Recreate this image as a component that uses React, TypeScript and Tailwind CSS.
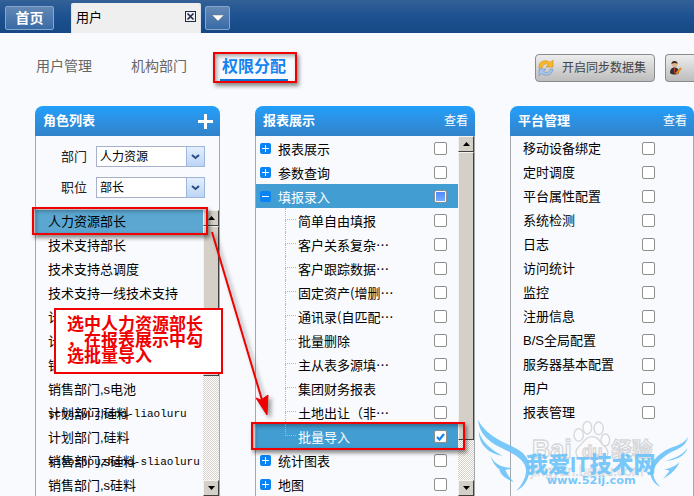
import clsx from "clsx";

const roles = [
    { name: "人力资源部长", active: true },
    { name: "技术支持部长" },
    { name: "技术支持总调度" },
    { name: "技术支持一线技术支持" },
    { name: "计划部长" },
    { name: "计划专员" },
    { name: "销售部长" },
    { name: "销售部门,s电池" },
    { name: "计划部门,硅料", account: "schaiwuzhang-liaoluru" },
    { name: "计划部门,硅料" },
    { name: "销售部门,s硅料", account: "xiaoshouzhang-sliaoluru" },
    { name: "销售部门,s硅料" },
];

const reports = [
    { name: "报表展示" },
    { name: "参数查询" },
    {
        name: "填报录入",
        children: [
            "简单自由填报",
            "客户关系复杂…",
            "客户跟踪数据…",
            "固定资产(增删…",
            "通讯录(自匹配…",
            "批量删除",
            "主从表多源填…",
            "集团财务报表",
            "土地出让（非…",
            "批量导入",
        ],
    },
    { name: "统计图表" },
    { name: "地图" },
];

const platform = [
    "移动设备绑定",
    "定时调度",
    "平台属性配置",
    "系统检测",
    "日志",
    "访问统计",
    "监控",
    "注册信息",
    "B/S全局配置",
    "服务器基本配置",
    "用户",
    "报表管理",
];

function Checkbox({ label, checked, mixed }: { label: string; checked?: boolean; mixed?: boolean }) {
    return (
        <span className="grid shrink-0">
            <input
                type="checkbox"
                aria-label={label}
                aria-checked={mixed ? "mixed" : undefined}
                defaultChecked={checked}
                className={clsx(
                    "peer col-start-1 row-start-1 w-[13px] h-[13px] appearance-none rounded-xs border border-[#8e8e8e]",
                    mixed ? "bg-linear-to-b from-[#4d86f7] to-[#79b0ff] shadow-[inset_0_0_0_1px_#fff]" : "bg-white"
                )}
            />
            <svg
                viewBox="0 0 13 13"
                className="col-start-1 row-start-1 w-[13px] h-[13px] hidden peer-checked:block pointer-events-none"
            >
                <path d="M3 7l2.5 2.5L10 4" fill="none" stroke="#1583ef" strokeWidth="2.2" />
            </svg>
        </span>
    );
}

function Redbox({ className }: { className: string }) {
    return (
        <span
            className={clsx(
                "absolute z-10 border-2 border-[#f00000] pointer-events-none shadow-[2px_3px_4px_rgba(0,0,0,0.45),inset_2px_2px_4px_rgba(0,0,0,0.35)]",
                className
            )}
        />
    );
}

function Toggle({ open, label }: { open?: boolean; label: string }) {
    return (
        <button aria-label={label} className="w-[11px] h-[11px] shrink-0 rounded-xs bg-[#0a84f5]">
            <svg viewBox="0 0 11 11" className="w-[11px] h-[11px]">
                <path d={open ? "M2 5.5h7" : "M2 5.5h7M5.5 2v7"} stroke="#fff" strokeWidth="1" />
            </svg>
        </button>
    );
}

// classic grey scrollbar: up button, thumb, dithered track, down button
function Scrollbar({ thumb }: { thumb: string }) {
    const raised = "bg-[#d4d0c8] border border-t-[#f4f2ee] border-l-[#f4f2ee] border-r-[#404040] border-b-[#404040]";
    return (
        <div className="w-4 shrink-0 h-full flex flex-col bg-[repeating-conic-gradient(#d4d0c8_0_25%,#fff_0_50%)] bg-[length:2px_2px]">
            <button aria-label="向上滚动" className={clsx("h-4 shrink-0 flex items-center justify-center", raised)}>
                <svg viewBox="0 0 7 4" className="w-[7px] h-1">
                    <path d="M0 4h7L3.5 0z" />
                </svg>
            </button>
            <div className={clsx(raised, thumb)} />
            <button aria-label="向下滚动" className={clsx("h-4 shrink-0 mt-auto flex items-center justify-center", raised)}>
                <svg viewBox="0 0 7 4" className="w-[7px] h-1">
                    <path d="M0 0h7L3.5 4z" />
                </svg>
            </button>
        </div>
    );
}

function Panel({ title, action, children }: { title: string; action: React.ReactNode; children: React.ReactNode }) {
    return (
        <section className="min-w-0 min-h-0 flex flex-col">
            <div className="h-[30px] shrink-0 rounded-t-lg bg-linear-to-b from-[#229ffb] to-[#3282c8] text-white flex items-center justify-between pl-2 pr-[7px]">
                <h2 className="text-[13px] font-bold">{title}</h2>
                {action}
            </div>
            <div className="flex-1 min-h-0 flex flex-col border-x border-[#a5a8ab]">{children}</div>
        </section>
    );
}

function Field({ id, label, value }: { id: string; label: string; value: string }) {
    return (
        <div className="flex items-center pl-[25px] pr-[14px]">
            <label htmlFor={id} className="w-[35px] text-[13px] text-[#222]">
                {label}
            </label>
            <div className="flex-1 grid">
                <select
                    id={id}
                    className="col-start-1 row-start-1 h-[21px] w-full appearance-none border border-[#a9b0c9] bg-white pl-[3px] text-[12px] text-black"
                >
                    <option>{value}</option>
                </select>
                <span className="col-start-1 row-start-1 justify-self-end w-[19px] h-[21px] border border-[#9fb6dc] bg-linear-to-b from-[#e3effd] to-[#bcd5f5] flex items-center justify-center pointer-events-none">
                    <svg viewBox="0 0 9 6" className="w-[9px] h-[6px]">
                        <path d="M1 1l3.5 3L8 1" fill="none" stroke="#2c4a86" strokeWidth="2" />
                    </svg>
                </span>
            </div>
        </div>
    );
}

function Watermark() {
    return (
        <svg
            viewBox="0 0 672 348"
            className="absolute right-0 bottom-0 z-20 w-[224px] h-[116px] pointer-events-none"
            fontFamily="'Liberation Sans','Noto Sans CJK SC',sans-serif"
        >
            <g fill="#fbfbfd" stroke="#d5d7db" strokeWidth="4" fontWeight="bold">
                <text x="186" y="234" fontSize="76">Bai</text>
                <ellipse cx="326" cy="165" rx="14" ry="19" />
                <ellipse cx="352" cy="143" rx="13" ry="19" />
                <ellipse cx="386" cy="145" rx="14" ry="19" />
                <ellipse cx="406" cy="180" rx="13" ry="18" />
                <path d="M366 170C345 170 340 190 325 202C312 214 318 240 342 238C360 234 374 234 390 238C414 240 420 216 406 202C390 190 388 170 366 170Z" />
                <text x="336" y="230" fontSize="50">du</text>
                <text x="424" y="230" fontSize="62">经验</text>
                <text x="182" y="288" fontSize="42" strokeWidth="2" fontWeight="normal">jingyan.baidu.com</text>
            </g>
            <g fill="#6cc3fa" fillOpacity="0.92">
                <path d="M24 120C50 168 100 186 140 206C172 224 184 250 178 280C172 306 158 324 139 332C158 312 168 290 168 272C168 246 144 230 112 212C66 192 30 170 24 120Z" />
                <path d="M26 154C38 190 62 208 98 228C54 220 28 196 26 154Z" />
                <path d="M62 228C76 256 96 262 126 264C120 268 112 268 106 270C112 284 120 294 131 306C106 296 92 286 88 268C76 260 66 244 62 228Z" />
                <path d="M654 170C648 200 624 206 600 218C570 236 552 256 550 278C550 296 560 310 572 320C552 314 540 292 540 272C544 240 568 220 596 206C620 196 642 192 654 170Z" />
                <path d="M652 203C646 228 620 240 586 243C614 234 638 226 652 203Z" />
                <path d="M628 247C622 264 606 282 578 297C586 288 594 280 598 272C594 270 588 270 582 270C600 264 616 260 628 247Z" />
                <text x="168" y="276" fontSize="66" fontWeight="900">我爱IT技术网</text>
                <text x="230" y="312" fontSize="34" fontWeight="bold" fontFamily="'DejaVu Sans',sans-serif">www.52ij.com</text>
            </g>
        </svg>
    );
}

export default function App() {
    return (
        <div className="relative h-screen overflow-hidden flex flex-col bg-[#f9fafd] font-['Liberation_Sans','Noto_Sans_CJK_SC',sans-serif] text-black">
            <header className="h-[33px] shrink-0 flex items-end pl-[5px] bg-linear-to-b from-[#336198] via-[#1d5190] to-[#164984]">
                <button className="w-[49px] h-6 mb-[3px] rounded-xs border border-[#86a6cb] bg-linear-to-b from-[#6388b4] to-[#386ba6] text-white text-[14px]/[22px] font-bold">
                    首页
                </button>
                <div className="w-[130px] h-[30px] ml-[17px] mr-1 border-x border-[#dce3ea] rounded-t-xs bg-[#efefef] flex items-start justify-between pl-1 pr-1">
                    <span className="text-[13px]/[29px]">用户</span>
                    <button aria-label="关闭" className="mt-2 w-[11px] h-[11px] border border-[#1c2c48]">
                        <svg viewBox="0 0 9 9" className="w-[9px] h-[9px]">
                            <path d="M1.5 1.5l6 6M7.5 1.5l-6 6" stroke="#1c2c48" strokeWidth="1.6" />
                        </svg>
                    </button>
                </div>
                <button
                    aria-label="更多"
                    className="w-[25px] h-6 mb-[3px] rounded-xs border border-[#86a6cb] bg-linear-to-b from-[#6388b4] to-[#386ba6] flex items-center justify-center"
                >
                    <svg viewBox="0 0 12 7" className="w-3 h-[7px]">
                        <path d="M0 0h12L6 6z" fill="#fff" stroke="#7d7460" strokeWidth="0.5" />
                    </svg>
                </button>
            </header>

            <div className="h-[73px] shrink-0 flex items-start justify-between pl-9">
                <nav className="flex items-start gap-[39px] pt-[21px] text-[14px]/[24px] text-[#666]">
                    <a href="#users">用户管理</a>
                    <a href="#orgs">机构部门</a>
                    <a href="#rights" className="relative -ml-[6px] px-[2px] text-[16px]/[25px] font-bold text-[#1583f0] border-b-2 border-[#1177dd]">
                        权限分配
                        <Redbox className="-left-[7px] -right-[9px] -top-[2px] -bottom-1" />
                    </a>
                </nav>
                <div className="flex gap-[10px] pt-[21px] overflow-hidden">
                    <button className="w-[120px] h-7 rounded-sm border border-[#8b8b8b] bg-linear-to-b from-[#ededed] to-[#bdbdbd] flex items-center gap-2 pl-[2px] text-[12px] text-[#444] whitespace-nowrap">
                        <svg viewBox="0 0 16 16" className="w-4 h-4 shrink-0">
                            <path d="M1 8C0 1 8-1 12 2.500L15 0v7H8l2.500-2.500C8 3 4.500 4 4 8z" fill="#f9b92a" stroke="#c98a1c" strokeWidth="0.6" />
                            <path d="M15 9c0 6-8 8-11.500 4.500L1 16V9h7l-2.500 2.300C8 13.500 12 12.500 12 9z" fill="#a9c5e8" stroke="#6c8fbd" strokeWidth="0.6" />
                        </svg>
                        开启同步数据集
                    </button>
                    <button aria-label="个人设置" className="w-[29px] h-7 rounded-l-sm border border-r-0 border-[#8b8b8b] bg-linear-to-b from-[#ededed] to-[#bdbdbd] pl-1">
                        <svg viewBox="0 0 14 16" className="w-[14px] h-4">
                            <circle cx="4.500" cy="4" r="3" fill="#e0b48a" />
                            <path d="M1.500 4C1 0 8 0 7.500 4C6 2.500 4 2.500 1.500 4z" fill="#3a2c22" />
                            <path d="M0 13C0 9 2 7.500 4.500 7.500S9 9 9 13c-2 2-7 2-9 0z" fill="#333" />
                            <path d="M4.500 8v5" stroke="#c33" strokeWidth="1.200" />
                            <path d="M6 14l5-6" stroke="#e08a20" strokeWidth="2" />
                        </svg>
                    </button>
                </div>
            </div>

            <main className="flex-1 min-h-0 grid grid-cols-[185fr_220fr_184fr] gap-[35px] pl-[35px]">
                <Panel
                    title="角色列表"
                    action={
                        <button aria-label="添加角色">
                            <svg viewBox="0 0 15 15" className="w-[15px] h-[15px]">
                                <path d="M0 7.500h15M7.500 0v15" stroke="#fff" strokeWidth="3" />
                            </svg>
                        </button>
                    }
                >
                    <form className="flex flex-col gap-[10px] pt-[10px] pb-3">
                        <Field id="department" label="部门" value="人力资源" />
                        <Field id="position" label="职位" value="部长" />
                    </form>
                    <div className="flex-1 min-h-0 flex">
                        <ul className="flex-1 min-w-0 text-[13px]/[24px] whitespace-nowrap">
                            {roles.map((role, i) => (
                                <li key={i} className={clsx("relative h-6 pl-3", role.active && "bg-[#5ba7d1]")}>
                                    {role.name}
                                    {role.account && (
                                        <span className="absolute left-3 top-0 font-['Liberation_Mono',monospace] text-[11px]/[24px]">
                                            {role.account}
                                        </span>
                                    )}
                                    {role.active && <Redbox className="-left-1 -right-[5px] -top-[3px] -bottom-[1px]" />}
                                </li>
                            ))}
                        </ul>
                        <Scrollbar thumb="h-[150px]" />
                    </div>
                </Panel>

                <Panel title="报表展示" action={<a href="#view-reports" className="text-[12px]">查看</a>}>
                    <div className="flex-1 min-h-0 flex">
                        <ul className="flex-1 min-w-0 font-['Noto_Sans_CJK_SC',sans-serif] text-[13px]/[23px] whitespace-nowrap">
                            {reports.map((group) => (
                                <li key={group.name}>
                                    <div
                                        className={clsx(
                                            "h-6 flex items-center gap-[7px] pl-1 pr-[11px]",
                                            group.children && "bg-[#429dd2] text-white"
                                        )}
                                    >
                                        <Toggle open={!!group.children} label={group.name} />
                                        <span className="flex-1">{group.name}</span>
                                        <Checkbox label={group.name} mixed={!!group.children} />
                                    </div>
                                    {group.children && (
                                        <ul>
                                            {group.children.map((name) => {
                                                const active = name === "批量导入";
                                                return (
                                                    <li
                                                        key={name}
                                                        className={clsx(
                                                            "relative h-6 flex items-center pl-[29px] pr-[11px]",
                                                            active && "bg-[#429dd2] text-white"
                                                        )}
                                                    >
                                                        <span className="w-[13px] h-full pr-[2px]">
                                                            <span className="block h-1/2 border-l border-b border-dotted border-[#b5b9be]" />
                                                            {!active && <span className="block h-1/2 border-l border-dotted border-[#b5b9be]" />}
                                                        </span>
                                                        <span className="flex-1">{name}</span>
                                                        <Checkbox label={name} checked={active} />
                                                        {active && <Redbox className="-left-[5px] -right-[7px] -top-[2px] -bottom-[2px]" />}
                                                    </li>
                                                );
                                            })}
                                        </ul>
                                    )}
                                </li>
                            ))}
                        </ul>
                        <Scrollbar thumb="h-[288px]" />
                    </div>
                </Panel>

                <Panel title="平台管理" action={<a href="#view-platform" className="text-[12px]">查看</a>}>
                    <ul className="text-[13px]/[23px] whitespace-nowrap">
                        {platform.map((name) => (
                            <li key={name} className="h-6 flex items-center justify-between pl-3 pr-[38px]">
                                <span>{name}</span>
                                <Checkbox label={name} />
                            </li>
                        ))}
                    </ul>
                </Panel>
            </main>

            {/* callout and the arrow from the role to the permission */}
            <p className="absolute left-[54px] top-[308px] z-20 w-[169px] h-[66px] border-2 border-[#f00000] bg-white pl-[11px] pt-[7px] text-[17px]/[16px] font-bold text-[#f00000] whitespace-nowrap">
                选中人力资源部长
                <br />
                ，在报表展示中勾
                <br />
                选批量导入
            </p>
            <svg
                viewBox="0 0 70 190"
                className="absolute left-[205px] top-[228px] z-20 w-[70px] h-[190px] pointer-events-none drop-shadow-[3px_3px_2px_rgba(0,0,0,0.4)]"
            >
                <path d="M7 4L57 172" stroke="#e00" strokeWidth="2" />
                <path d="M62 187L51 170L56 172L63 167Z" fill="#e00" stroke="#e00" />
            </svg>
            <Watermark />
        </div>
    );
}
